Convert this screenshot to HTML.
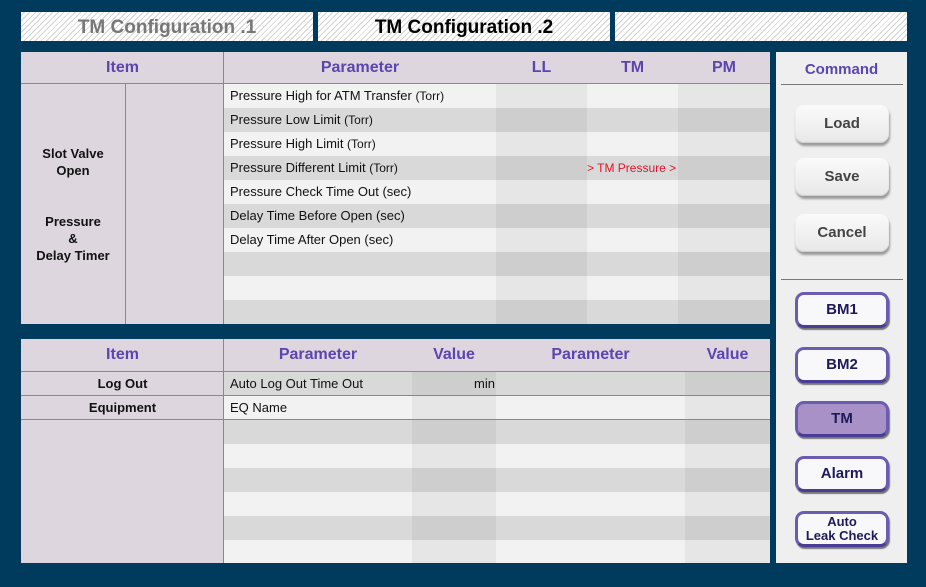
<!DOCTYPE html>
<html><head><style>
*{margin:0;padding:0;box-sizing:border-box}
body{width:926px;height:587px;background:#003a5c;position:relative;overflow:hidden;font-family:"Liberation Sans",Arial,sans-serif}
.a{position:absolute}
.tab{position:absolute;top:12px;height:29px;background:repeating-linear-gradient(135deg,#fff 0 2px,#d2d2d2 2px 3px,#fff 3px 4px);font-weight:bold;font-size:19px;text-align:center;line-height:32px}
.hd{position:absolute;background:#ddd6df;color:#5b45b0;font-weight:bold;font-size:16px;text-align:center}
.it{position:absolute;background:#ddd6df;color:#111;font-weight:bold;font-size:13px;text-align:center}
.r{position:absolute;height:24px;font-size:13px;line-height:24px;color:#111;padding-left:6px}
.r small{font-size:12px}
.t1{left:224px;width:546px}
.L{background:linear-gradient(to right,#f2f2f2 0 272px,#e6e6e6 272px 363px,#f2f2f2 363px 454px,#e6e6e6 454px)}
.D{background:linear-gradient(to right,#d9d9d9 0 272px,#cfcecf 272px 363px,#d9d9d9 363px 454px,#cfcecf 454px)}
.L2{background:linear-gradient(to right,#f2f2f2 0 188px,#e6e6e6 188px 272px,#f2f2f2 272px 461px,#e6e6e6 461px)}
.D2{background:linear-gradient(to right,#d9d9d9 0 188px,#cfcecf 188px 272px,#d9d9d9 272px 461px,#cfcecf 461px)}
.vl{position:absolute;width:2px;background:#888}
.hl{position:absolute;height:2px;background:#888}
.gb{position:absolute;left:795px;width:94px;height:38px;border-radius:9px;background:linear-gradient(#fafafa,#e8e8e8);box-shadow:1px 3px 2px #9a9a9a, inset 0 -1px 1px #ccc;text-align:center;line-height:38px;font-size:15px;font-weight:bold;color:#444}
.pb{position:absolute;left:795px;width:94px;height:36px;border-radius:9px;background:#f8f8fa;border:3px solid #6a5cb0;border-bottom-color:#4a3d95;box-shadow:1px 2px 1px #777;text-align:center;line-height:30px;font-size:15px;font-weight:bold;color:#1e1a5a}
</style></head><body>
<div class="tab" style="left:21px;width:292px;color:#777">TM Configuration .1</div>
<div class="tab" style="left:318px;width:292px;color:#000">TM Configuration .2</div>
<div class="tab" style="left:615px;width:292px"></div>

<div class="hd" style="left:21px;top:52px;width:749px;height:31px"></div>
<div class="hd" style="left:21px;top:52px;width:203px;line-height:31px">Item</div>
<div class="hd" style="left:224px;top:52px;width:272px;line-height:31px">Parameter</div>
<div class="hd" style="left:496px;top:52px;width:91px;line-height:31px">LL</div>
<div class="hd" style="left:587px;top:52px;width:91px;line-height:31px">TM</div>
<div class="hd" style="left:678px;top:52px;width:92px;line-height:31px">PM</div>
<div class="hl" style="left:21px;top:83px;width:749px;height:1px"></div>
<div class="it" style="left:21px;top:84px;width:203px;height:240px"></div>
<div class="it" style="left:21px;top:145px;width:104px;line-height:17px">Slot Valve<br>Open</div>
<div class="it" style="left:21px;top:213px;width:104px;line-height:17px">Pressure<br>&amp;<br>Delay Timer</div>
<div class="vl" style="left:125px;top:84px;height:240px;width:1px"></div>
<div class="vl" style="left:223px;top:52px;height:272px;width:1px"></div>

<div class="r t1 L" style="top:84px">Pressure High for ATM Transfer <small>(Torr)</small></div>
<div class="r t1 D" style="top:108px">Pressure Low Limit <small>(Torr)</small></div>
<div class="r t1 L" style="top:132px">Pressure High Limit <small>(Torr)</small></div>
<div class="r t1 D" style="top:156px">Pressure Different Limit <small>(Torr)</small><span class="a" style="left:363px;font-size:12px;color:#e8102a">&gt; TM Pressure &gt;</span></div>
<div class="r t1 L" style="top:180px">Pressure Check Time Out (sec)</div>
<div class="r t1 D" style="top:204px">Delay Time Before Open (sec)</div>
<div class="r t1 L" style="top:228px">Delay Time After Open (sec)</div>
<div class="r t1 D" style="top:252px"></div>
<div class="r t1 L" style="top:276px"></div>
<div class="r t1 D" style="top:300px"></div>

<div class="hd" style="left:21px;top:339px;width:749px;height:32px"></div>
<div class="hd" style="left:21px;top:339px;width:203px;line-height:32px">Item</div>
<div class="hd" style="left:224px;top:339px;width:188px;line-height:32px">Parameter</div>
<div class="hd" style="left:412px;top:339px;width:84px;line-height:32px">Value</div>
<div class="hd" style="left:496px;top:339px;width:189px;line-height:32px">Parameter</div>
<div class="hd" style="left:685px;top:339px;width:85px;line-height:32px">Value</div>
<div class="it" style="left:21px;top:372px;width:203px;height:191px"></div>
<div class="it" style="left:21px;top:372px;width:203px;line-height:23px">Log Out</div>
<div class="it" style="left:21px;top:396px;width:203px;line-height:23px">Equipment</div>
<div class="r t1 D2" style="top:372px;height:23px;line-height:23px">Auto Log Out Time Out<span class="a" style="left:250px">min</span></div>
<div class="r t1 L2" style="top:396px;height:23px;line-height:23px">EQ Name</div>
<div class="r t1 D2" style="top:420px"></div>
<div class="r t1 L2" style="top:444px"></div>
<div class="r t1 D2" style="top:468px"></div>
<div class="r t1 L2" style="top:492px"></div>
<div class="r t1 D2" style="top:516px"></div>
<div class="r t1 L2" style="top:540px;height:23px"></div>
<div class="hl" style="left:21px;top:371px;width:749px;height:1px"></div>
<div class="hl" style="left:21px;top:395px;width:749px;height:1px"></div>
<div class="hl" style="left:21px;top:419px;width:749px;height:1px"></div>
<div class="vl" style="left:223px;top:339px;height:224px;width:1px"></div>

<div class="a" style="left:776px;top:52px;width:131px;height:511px;background:#efefef"></div>
<div class="a" style="left:776px;top:61px;width:131px;text-align:center;font-weight:bold;font-size:15px;color:#5b45b0">Command</div>
<div class="a" style="left:781px;top:84px;width:122px;height:1px;background:#777"></div>
<div class="gb" style="top:105px">Load</div>
<div class="gb" style="top:158px">Save</div>
<div class="gb" style="top:214px">Cancel</div>
<div class="a" style="left:781px;top:279px;width:122px;height:1px;background:#777"></div>
<div class="pb" style="top:292px">BM1</div>
<div class="pb" style="top:347px">BM2</div>
<div class="pb" style="top:401px;background:#a791c6">TM</div>
<div class="pb" style="top:456px">Alarm</div>
<div class="pb" style="top:511px;line-height:14px;font-size:13px;padding-top:1px">Auto<br>Leak Check</div>
</body></html>
